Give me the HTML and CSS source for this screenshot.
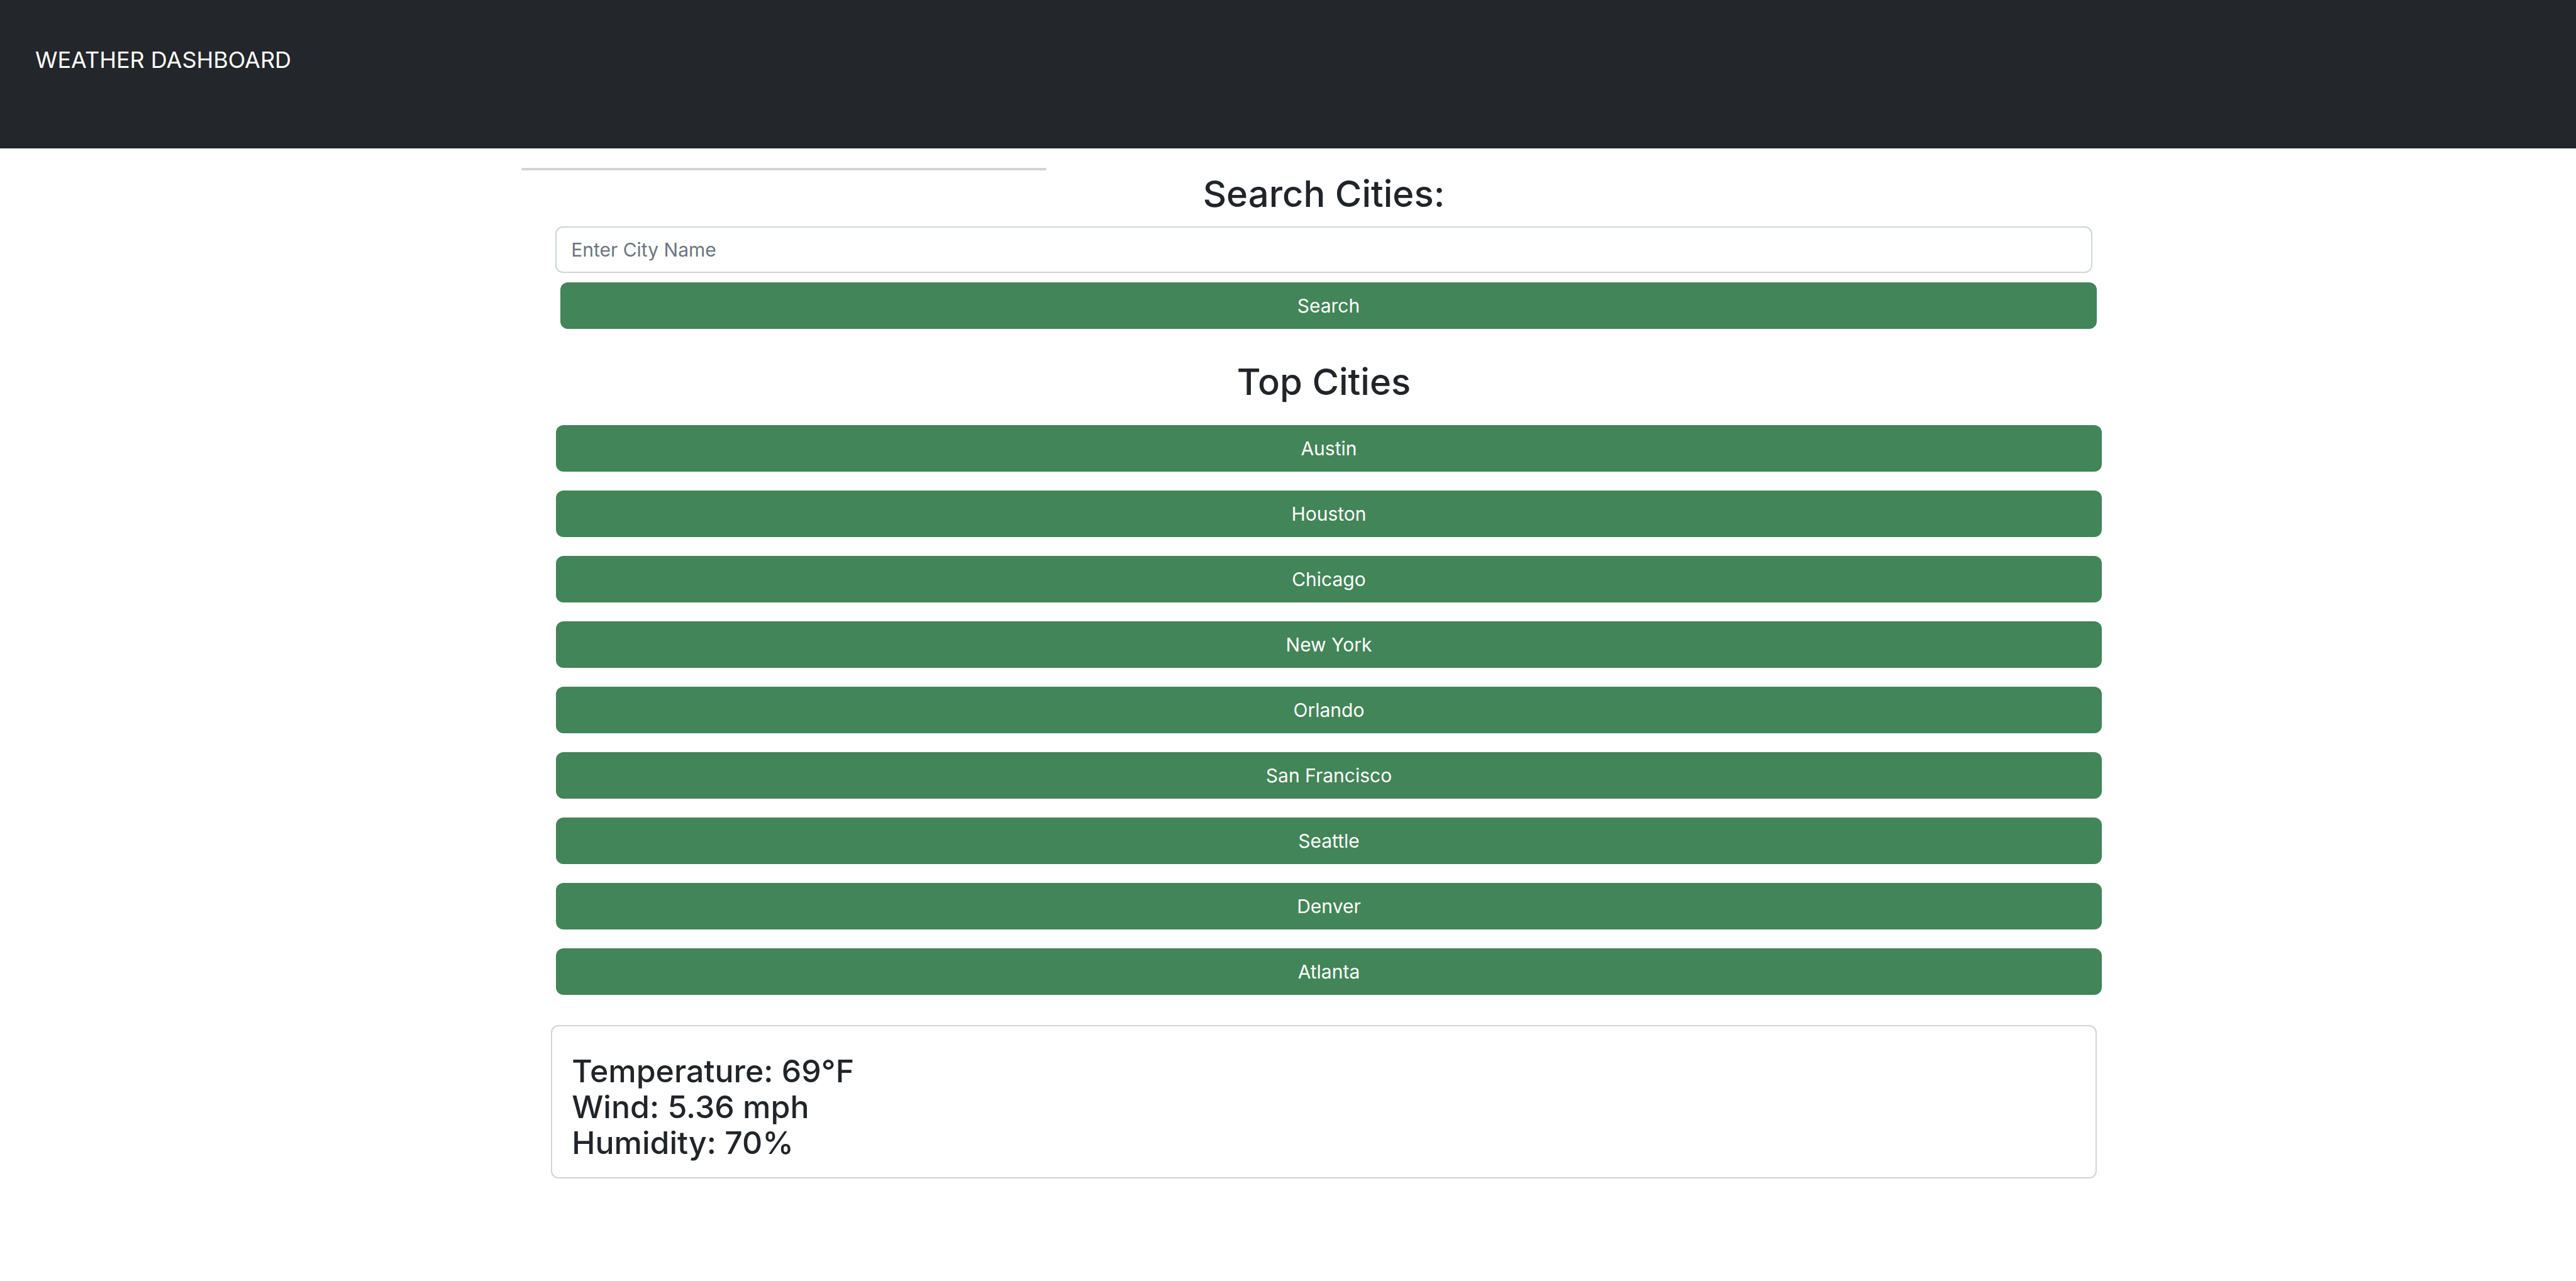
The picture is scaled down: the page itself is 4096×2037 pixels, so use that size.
FILE: index.html
```html
<!DOCTYPE html>
<html lang="en">
<head>
  <meta charset="utf-8">
  <meta name="viewport" content="width=device-width, initial-scale=1">
  <title>Weather Dashboard</title>
  <link rel="stylesheet" href="styles.css">
</head>
<body>
  <header class="navbar">
    <h1 class="navbar-title">WEATHER DASHBOARD</h1>
  </header>
  <main class="main">
    <hr class="rule">
    <div class="column">
      <form class="search" onsubmit="return false">
        <h2 class="heading"><label for="city">Search Cities:</label></h2>
        <input class="search-input" id="city" type="text" placeholder="Enter City Name">
        <button class="btn search-btn" type="submit">Search</button>
      </form>
      <section class="cities">
        <h2 class="heading">Top Cities</h2>
        <div class="city-list">
          <button class="btn" type="button">Austin</button>
          <button class="btn" type="button">Houston</button>
          <button class="btn" type="button">Chicago</button>
          <button class="btn" type="button">New York</button>
          <button class="btn" type="button">Orlando</button>
          <button class="btn" type="button">San Francisco</button>
          <button class="btn" type="button">Seattle</button>
          <button class="btn" type="button">Denver</button>
          <button class="btn" type="button">Atlanta</button>
        </div>
      </section>
      <section class="card">
        <h3 class="reading">Temperature: 69°F</h3>
        <h3 class="reading">Wind: 5.36 mph</h3>
        <h3 class="reading">Humidity: 70%</h3>
      </section>
    </div>
  </main>
</body>
</html>
```
FILE: styles.css
```css
* {
  box-sizing: border-box;
}

body {
  margin: 0;
  background: #fff;
  color: #212529;
  font-family: Inter, "Liberation Sans", sans-serif;
  font-size: 30px;
  line-height: 46px;
}

.navbar {
  padding: 66px 56px 112px;
  background: #23262a;
  color: #fff;
}

.navbar-title {
  margin: 0;
  font-size: 36px;
  font-weight: 400;
  line-height: 58px;
}

.main {
  margin: 0 18vw 0 20vw;
  padding: 31px 25px 48px 10px;
}

.rule {
  width: calc(100% / 3);
  height: 4px;
  margin: 0;
  border: 0;
  border-radius: 2px;
  background: #d3d3d3;
}

.column {
  padding-left: 47px;
}

.search {
  display: flex;
  flex-direction: column;
}

.heading {
  margin: 0 0 15px;
  font-size: 58px;
  font-weight: 500;
  line-height: 74px;
  text-align: center;
}

.search-input {
  height: 74px;
  margin: 0 7px 15px;
  padding: 0 23px;
  border: 2px solid #ced4da;
  border-radius: 12px;
  background: #fff;
  color: inherit;
  font: inherit;
}

.search-input::placeholder {
  color: #6c757d;
  opacity: 1;
}

.btn {
  padding: 14px 23px;
  border: 0;
  border-radius: 12px;
  background: #428558;
  color: #fff;
  font: inherit;
  text-align: center;
  cursor: pointer;
}

.search-btn {
  margin-left: 15px;
}

.cities {
  margin-top: 47px;
}

.city-list {
  display: grid;
  gap: 30px;
  margin: 32px -8px 0 8px;
}

.cities .heading {
  margin-bottom: 0;
}

.card {
  margin-top: 48px;
  padding: 43px 31px 26px;
  border: 2px solid #d3d3d3;
  border-radius: 12px;
}

.reading {
  margin: 0;
  font-size: 50px;
  font-weight: 500;
  line-height: 57px;
}
```
